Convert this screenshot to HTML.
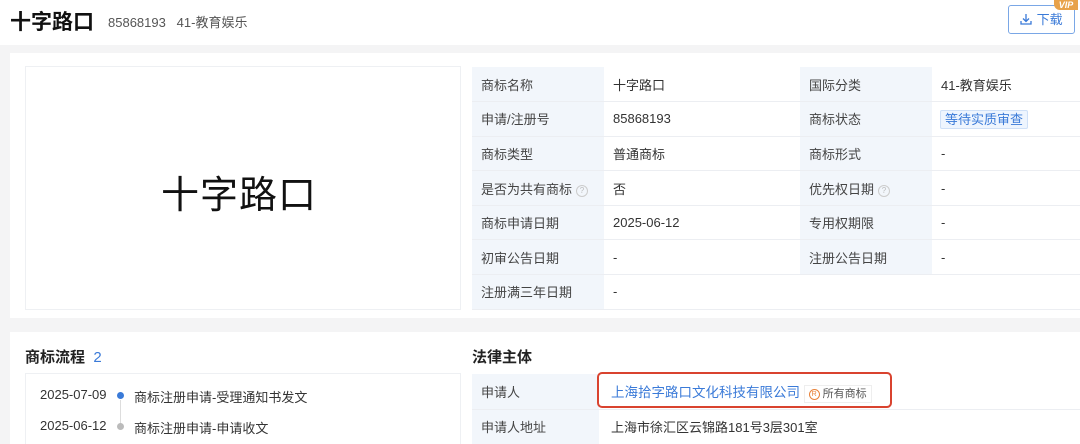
<!DOCTYPE html>
<html><head><meta charset="utf-8"><style>
*{margin:0;padding:0;box-sizing:border-box}
html,body{width:1080px;height:444px;overflow:hidden}
body{background:#f4f4f5;font-family:"Liberation Sans","Noto Sans CJK SC",sans-serif;color:#333;position:relative}
.abs{position:absolute}
.hdr{left:0;top:0;width:1080px;height:45px;background:#fff}
.card{background:#fff}
table{border-collapse:collapse;font-size:13px}
td{border-bottom:1px solid #eceef2;padding-left:9px;height:34.6px;vertical-align:middle}
td.l{background:#f2f6fb;color:#444}
.q{display:inline-block;width:12px;height:12px;border:1px solid #ccc;border-radius:50%;font-size:8px;color:#bbb;text-align:center;line-height:10px;margin-left:4px;vertical-align:1px}
</style></head><body>
<div class="abs hdr"></div>
<div class="abs" style="left:10px;top:6px;font-size:21px;font-weight:bold;color:#111">十字路口</div>
<div class="abs" style="left:108px;top:12px;font-size:13px;color:#555">85868193&nbsp;&nbsp;&nbsp;41-教育娱乐</div>
<div class="abs" style="left:1008px;top:5px;width:67px;height:29px;border:1px solid #7aa7e6;border-radius:3px;color:#3a7ad8;font-size:13px;line-height:27px;padding-left:10px">
<svg width="14" height="14" viewBox="0 0 14 14" style="vertical-align:-2px" fill="none" stroke="#3a7ad8" stroke-width="1.3"><path d="M7 2v7M4 6.5l3 3 3-3M2 9v3h10V9"/></svg> 下载</div>
<div class="abs" style="left:1054px;top:0;width:24px;height:10px;background:#e8a24a;border-radius:0 0 0 6px;color:#fff;font-size:9px;font-weight:bold;font-style:italic;line-height:10px;text-align:center">VIP</div>

<div class="abs card" style="left:10px;top:53px;width:1070px;height:265px"></div>
<div class="abs" style="left:25px;top:66px;width:436px;height:244px;border:1px solid #eef0f3;background:#fff"></div>
<div class="abs" style="left:161px;top:164px;font-size:38px;color:#111;letter-spacing:1px">十字路口</div>
<table class="abs" style="left:472px;top:67px;width:608px">
<tr><td class="l" style="width:132px">商标名称</td><td style="width:196px">十字路口</td><td class="l" style="width:132px">国际分类</td><td>41-教育娱乐</td></tr>
<tr><td class="l">申请/注册号</td><td>85868193</td><td class="l">商标状态</td><td style="padding-left:8px"><span style="border:1px solid #cfe0f7;background:#eef5fe;color:#3a7ad8;padding:1px 4px;border-radius:2px">等待实质审查</span></td></tr>
<tr><td class="l">商标类型</td><td>普通商标</td><td class="l">商标形式</td><td>-</td></tr>
<tr><td class="l">是否为共有商标<span class="q">?</span></td><td>否</td><td class="l">优先权日期<span class="q">?</span></td><td>-</td></tr>
<tr><td class="l">商标申请日期</td><td>2025-06-12</td><td class="l">专用权期限</td><td>-</td></tr>
<tr><td class="l">初审公告日期</td><td>-</td><td class="l">注册公告日期</td><td>-</td></tr>
<tr><td class="l">注册满三年日期</td><td colspan="3">-</td></tr>
</table>

<div class="abs card" style="left:10px;top:332px;width:1070px;height:112px"></div>
<div class="abs" style="left:25px;top:346px;font-size:15px;font-weight:bold;color:#222">商标流程 <span style="color:#3a7ad8;font-weight:normal">&nbsp;2</span></div>
<div class="abs" style="left:25px;top:373px;width:436px;height:80px;border:1px solid #eef0f3"></div>
<div class="abs" style="left:40px;top:387px;font-size:13px;color:#333">2025-07-09</div>
<div class="abs" style="left:40px;top:418px;font-size:13px;color:#333">2025-06-12</div>
<div class="abs" style="left:120px;top:400px;width:1px;height:24px;background:#ddd"></div>
<div class="abs" style="left:117px;top:392px;width:7px;height:7px;border-radius:50%;background:#3a7ad8"></div>
<div class="abs" style="left:117px;top:423px;width:7px;height:7px;border-radius:50%;background:#bbb"></div>
<div class="abs" style="left:134px;top:387px;font-size:13px">商标注册申请-受理通知书发文</div>
<div class="abs" style="left:134px;top:418px;font-size:13px">商标注册申请-申请收文</div>

<div class="abs" style="left:472px;top:346px;font-size:15px;font-weight:bold;color:#222">法律主体</div>
<table class="abs" style="left:472px;top:374px;width:608px">
<tr><td class="l" style="width:127px;height:35px">申请人</td><td style="padding-left:12px"><span style="color:#3a7ad8;font-size:13.5px">上海拾字路口文化科技有限公司</span> <span style="border:1px solid #eee;padding:2px 4px;font-size:11px;color:#555"><span style="display:inline-block;width:11px;height:11px;border:1px solid #e8823a;border-radius:50%;color:#e8823a;font-size:7px;text-align:center;line-height:9px;vertical-align:1px">R</span> 所有商标</span></td></tr>
<tr><td class="l" style="height:35px">申请人地址</td><td style="padding-left:12px">上海市徐汇区云锦路181号3层301室</td></tr>
</table>
<div class="abs" style="left:597px;top:372px;width:295px;height:36px;border:2px solid #d9432f;border-radius:5px"></div>
</body></html>
